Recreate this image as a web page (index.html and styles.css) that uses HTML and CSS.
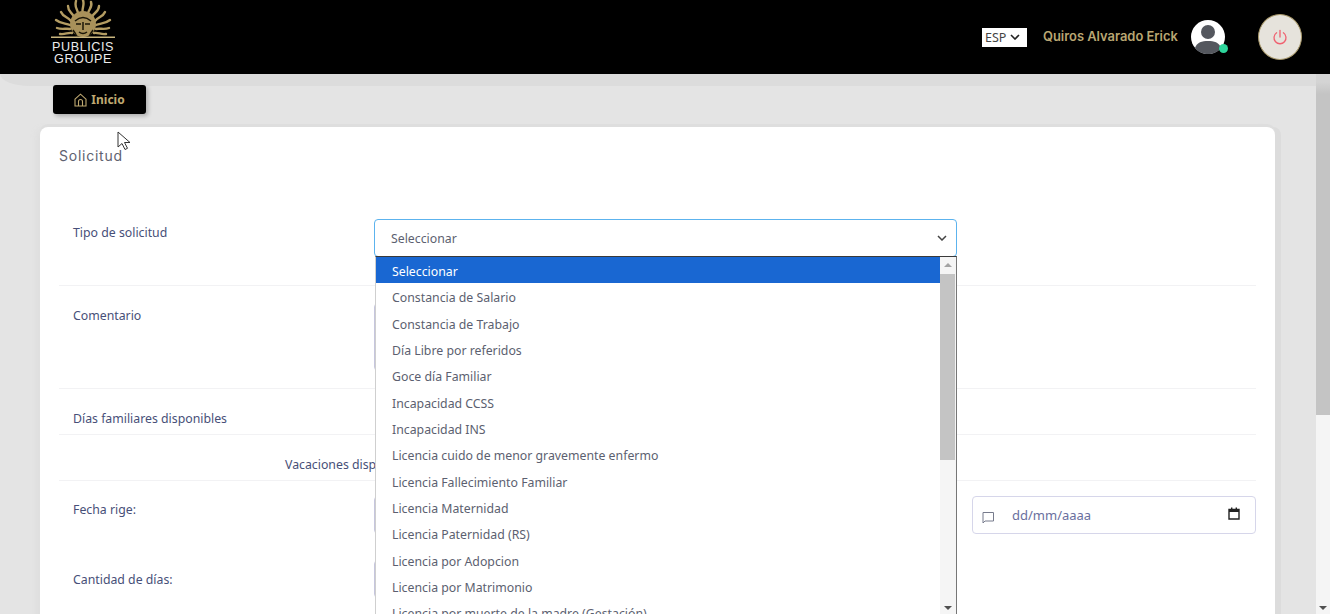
FILE: index.html
```html
<html>
  <head>
    <link rel="stylesheet" href="styles.css">
    <title>Solicitud</title>
  </head>
  <body>
    <header class="topbar">
      <div class="logo">
        <svg class="sun" width="64" height="38" viewBox="0 0 64 38">
          <g stroke="#b39c62" stroke-width="2.4" fill="none" stroke-linecap="round">
            <path d="M32 14 C30 9 34 6 32 0"/>
            <path d="M37 14 C37 9 42 8 40 2"/>
            <path d="M27 14 C27 9 23 8 25 1"/>
            <path d="M41 17 C43 12 48 12 48 6"/>
            <path d="M23 17 C21 12 17 12 17 6"/>
            <path d="M44 21 C47 17 52 17 54 12"/>
            <path d="M20 21 C17 17 12 17 10 12"/>
            <path d="M45 25 C49 23 54 24 59 20"/>
            <path d="M19 25 C15 23 10 24 5 20"/>
            <path d="M45 29 C49 28 53 30 58 28"/>
            <path d="M19 29 C15 28 11 30 6 28"/>
            <path d="M43 33 C47 32 50 35 55 34"/>
            <path d="M21 33 C17 32 14 35 9 34"/>
          </g>
          <ellipse cx="32" cy="24" rx="13" ry="13" fill="#a8915a"/>
          <path d="M24 21 Q32 14 40 21 M25 24 h5 M34 24 h5 M32 22 v8 M28 32 Q32 35 36 32 M22 30 Q25 34 26 37 M42 30 Q39 34 38 37" stroke="#1a1608" stroke-width="1.5" fill="none"/>
          <rect x="0" y="36.5" width="64" height="1.5" fill="#c9b67f"/>
        </svg>
        <span class="logo-text">PUBLICIS</span>
        <span class="logo-text">GROUPE</span>
      </div>
      <div class="top-right">
        <div class="lang">ESP
          <svg width="10" height="6" viewBox="0 0 10 6"><path d="M1 1l4 4 4-4" stroke="#222" stroke-width="1.6" fill="none"/></svg>
        </div>
        <span class="user-name">Quiros Alvarado Erick</span>
        <div class="avatar">
          <svg width="34" height="34" viewBox="0 0 34 34">
            <circle cx="17" cy="17" r="17" fill="#fff"/>
            <circle cx="17" cy="12" r="7" fill="#54575e"/>
            <path d="M4 28 C6 22 11 21 17 21 C23 21 28 22 30 28 C27 32 22 34 17 34 C12 34 7 32 4 28Z" fill="#54575e"/>
          </svg>
          <span class="online"></span>
        </div>
        <div class="power">
          <svg width="16" height="16" viewBox="0 0 16 16" fill="none" stroke="#f0606f" stroke-width="1.3" stroke-linecap="round">
            <path d="M8 1.5v6.5"/>
            <path d="M4.6 3.8a6 6 0 1 0 6.8 0"/>
          </svg>
        </div>
      </div>
    </header>

    <div class="page">
      <div class="content">
        <div class="strip"></div>
        <a class="btn-home">
          <svg width="13" height="14" viewBox="0 0 13 14" fill="none" stroke="#bfa971" stroke-width="1.1">
            <path d="M1 6.2L6.5 1.2 12 6.2V13H1Z"/>
            <path d="M4.5 13V8.5a2 2 0 0 1 4 0V13"/>
          </svg>
          Inicio
        </a>

        <div class="card">
          <h4 class="card-title">Solicitud</h4>

          <div class="row row-tipo">
            <label class="lbl">Tipo de solicitud</label>
            <div class="fake-select">Seleccionar
              <svg width="10" height="6" viewBox="0 0 10 6"><path d="M1 1l4 4 4-4" stroke="#444" stroke-width="1.5" fill="none"/></svg>
            </div>
          </div>
          <div class="row row-comentario">
            <label class="lbl">Comentario</label>
            <div class="field field-comment"></div>
          </div>
          <div class="row row-familiares">
            <label class="lbl">Días familiares disponibles</label>
          </div>
          <div class="row row-vacaciones">
            <span class="vac">Vacaciones disponibles</span>
          </div>
          <div class="row row-fecha">
            <label class="lbl">Fecha rige:</label>
            <div class="field field-date"></div>
            <div class="date-box">
              <svg width="13" height="13" viewBox="0 0 13 13" fill="none" stroke="#777b8c" stroke-width="1">
                <path d="M1 1.5h10.5v8.5H3L1 12Z"/>
              </svg>
              <span class="date-text">dd/mm/aaaa</span>
              <svg class="cal" width="12" height="13" viewBox="0 0 12 13">
                <path d="M1 2.5h10v9.5H1Z" fill="none" stroke="#222" stroke-width="1.4"/>
                <path d="M1 2h10v3H1ZM3 .5h1.4V3H3ZM7.6 .5H9V3H7.6Z" fill="#222"/>
              </svg>
            </div>
          </div>
          <div class="row row-cantidad">
            <label class="lbl">Cantidad de días:</label>
            <div class="field field-days"></div>
          </div>
        </div>
      </div>

      <div class="page-scroll">
        <div class="page-thumb"></div>
        <span class="arrow-down"></span>
      </div>
    </div>

    <!-- open select list -->
    <div class="dropdown">
      <ul class="options">
        <li class="selected">Seleccionar</li>
        <li>Constancia de Salario</li>
        <li>Constancia de Trabajo</li>
        <li>Día Libre por referidos</li>
        <li>Goce día Familiar</li>
        <li>Incapacidad CCSS</li>
        <li>Incapacidad INS</li>
        <li>Licencia cuido de menor gravemente enfermo</li>
        <li>Licencia Fallecimiento Familiar</li>
        <li>Licencia Maternidad</li>
        <li>Licencia Paternidad (RS)</li>
        <li>Licencia por Adopcion</li>
        <li>Licencia por Matrimonio</li>
        <li>Licencia por muerte de la madre (Gestación)</li>
      </ul>
      <div class="list-scroll">
        <span class="arrow-up"></span>
        <div class="list-thumb"></div>
        <span class="arrow-down"></span>
      </div>
    </div>

    <svg class="cursor" width="16" height="20" viewBox="0 0 16 20">
      <path d="M1 1v15l4-3.5 3 6 2.5-1.2-3-5.8h5.5Z" fill="#fff" stroke="#333" stroke-width="1"/>
    </svg>
  </body>
</html>
```

FILE: styles.css
```css
html, body {
    margin: 0;
    padding: 0;
    height: 614px;
    overflow: hidden;
}

body {
    font-family: "Noto Sans", "Open Sans", sans-serif;
    font-size: 12.3px;
    color: #474f78;
    background-color: #e4e4e4;
}

/* Header */
.topbar {
    height: 74px;
    background-color: #000;
    display: flex;
    justify-content: space-between;
    align-items: flex-start;
    padding-left: 51px;
    padding-right: 28px;
}

.logo {
    width: 64px;
    display: flex;
    flex-direction: column;
    align-items: center;
    color: #ececec;
}

.sun {
    display: block;
    margin-bottom: 3px;
}

.logo-text {
    font-family: "Liberation Sans", sans-serif;
    font-size: 12.6px;
    line-height: 12px;
    letter-spacing: 0.55px;
}

.top-right {
    display: flex;
    align-items: center;
    padding-top: 14px;
}

.lang {
    width: 45px;
    height: 19px;
    box-sizing: border-box;
    margin-right: 16px;
    padding-left: 3px;
    display: flex;
    align-items: center;
    gap: 4px;
    background-color: #fff;
    color: #444;
    font-size: 12.5px;
}

.user-name {
    font-family: "Inter", "Noto Sans", sans-serif;
    font-weight: 600;
    font-size: 12.9px;
    color: #b9a672;
    width: 148px;
    margin-bottom: 1px;
}

.avatar {
    position: relative;
    width: 34px;
    height: 34px;
    margin-right: 33px;
}

.avatar svg {
    display: block;
}

.online {
    position: absolute;
    right: -3px;
    bottom: 1px;
    width: 9px;
    height: 9px;
    border-radius: 50%;
    background-color: #2ed59b;
}

.power {
    width: 42px;
    height: 44px;
    border-radius: 50%;
    border: 1px solid #a8986a;
    background-color: #e6e3dc;
    display: flex;
    align-items: center;
    justify-content: center;
}

/* Content */
.page {
    display: flex;
    height: 540px;
}

.content {
    position: relative;
    flex: 1;
    min-width: 0;
    padding-left: 40px;
    padding-right: 41px;
}

.strip {
    height: 12px;
    background-color: #dcdcdc;
    border-bottom-left-radius: 30px 12px;
    margin-left: -40px;
    margin-right: -41px;
}

.btn-home {
    display: flex;
    align-items: center;
    justify-content: center;
    gap: 4px;
    width: 93px;
    height: 29px;
    margin-left: 13px;
    margin-top: -1px;
    background-color: #000;
    border-radius: 3px;
    box-shadow: 2px 2px 4px rgba(0, 0, 0, 0.25);
    color: #bfa971;
    font-weight: 700;
    font-size: 12px;
}

.card {
    margin-top: 13px;
    height: 500px;
    padding: 0 19px;
    background-color: #fff;
    border-radius: 8px;
    box-shadow: 0 -3px 0 #dedede, -6px 0 6px -2px #dedede, 6px 0 0 #dcdcdc;
}

.card-title {
    margin: 0;
    padding-top: 20px;
    height: 40px;
    font-family: "Inter", sans-serif;
    font-weight: 400;
    font-size: 14px;
    letter-spacing: 0.75px;
    line-height: 18px;
    color: #5f6270;
}

.row {
    position: relative;
    display: flex;
    padding-left: 14px;
    border-bottom: 1px solid #f2f2f4;
    box-sizing: border-box;
}

.row-tipo {
    height: 99px;
    padding-top: 37px;
}

.fake-select {
    position: absolute;
    left: 315px;
    top: 32px;
    width: 583px;
    height: 38px;
    box-sizing: border-box;
    padding: 0 9px 0 16px;
    display: flex;
    align-items: center;
    justify-content: space-between;
    border: 1px solid #5cb3ee;
    border-radius: 4px;
    color: #5c5f70;
}

.row-comentario {
    height: 103px;
    padding-top: 21px;
}

.row-familiares {
    height: 46px;
    padding-top: 21px;
}

.row-vacaciones {
    height: 46px;
    padding-top: 21px;
    padding-left: 226px;
}

.row-fecha {
    height: 89px;
    padding-top: 20px;
    border-bottom: 0;
}

.row-cantidad {
    padding-top: 1px;
    border-bottom: 0;
}

/* inputs that the open list covers, only their left edge shows */
.field {
    position: absolute;
    left: 315px;
    width: 200px;
    box-sizing: border-box;
    border: 1px solid #c6c6de;
    border-radius: 4px;
    background-color: #fff;
}

.field-comment {
    top: 17px;
    height: 68px;
}

.field-date {
    top: 15px;
    height: 38px;
}

.field-days {
    top: -10px;
    height: 38px;
}

.date-box {
    position: absolute;
    left: 913px;
    top: 15px;
    width: 284px;
    height: 38px;
    box-sizing: border-box;
    padding: 0 15px 0 10px;
    display: flex;
    align-items: center;
    border: 1px solid #d6d6ea;
    border-radius: 4px;
    background-color: #fff;
}

.date-box svg:first-child {
    margin-top: 5px;
    margin-left: -1px;
}

.date-box .cal {
    margin-bottom: 3px;
}

.date-text {
    margin-left: 17px;
    flex: 1;
    color: #6a6f9e;
    font-size: 13px;
}

/* Select list over the form */
.dropdown {
    position: absolute;
    left: 375px;
    top: 256px;
    width: 582px;
    height: 358px;
    box-sizing: border-box;
    border: 1px solid #767676;
    border-bottom: 0;
    border-top-color: #3a3a3a;
    border-left-color: #cfcfcf;
    background-color: #fff;
    display: flex;
    overflow: hidden;
}

.options {
    flex: 1;
    min-width: 0;
    margin: 0;
    padding: 0;
    list-style: none;
    color: #5c5f70;
}

.options li {
    height: 26.35px;
    line-height: 30px;
    padding-left: 16px;
}

.options li.selected {
    background-color: #1967d2;
    color: #fff;
}

.list-scroll,
.page-scroll {
    position: relative;
    background-color: #f5f5f5;
}

.list-scroll {
    width: 16px;
}

.page-scroll {
    width: 14px;
    flex: none;
}

.list-thumb {
    position: absolute;
    left: 0;
    right: 1px;
    top: 17px;
    height: 186px;
    background-color: #c4c4c4;
}

.page-thumb {
    height: 341px;
    background: linear-gradient(#d4d4d4 8px, #c4c4c4 20px);
}

.arrow-up,
.arrow-down {
    position: absolute;
    left: 50%;
    margin-left: -4px;
    width: 0;
    height: 0;
    border-left: 4px solid transparent;
    border-right: 4px solid transparent;
}

.arrow-up {
    top: 6px;
    border-bottom: 4px solid #a3a3a3;
}

.arrow-down {
    bottom: 4px;
    border-top: 4px solid #505050;
}

.cursor {
    position: absolute;
    left: 117px;
    top: 131px;
}
```
